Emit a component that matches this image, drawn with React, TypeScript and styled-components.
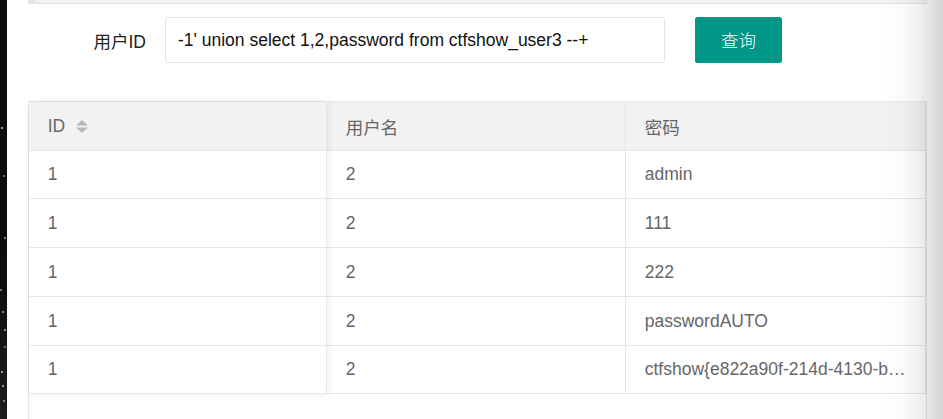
import React from 'react';
import styled, { createGlobalStyle, css } from 'styled-components';

const GlobalStyle = createGlobalStyle`
  html, body {
    margin: 0;
    padding: 0;
    height: 100%;
    overflow: hidden;
    background: #ffffff;
  }
  body {
    font-family: 'Liberation Sans', Arial, 'Noto Sans CJK SC', sans-serif;
  }
  * {
    box-sizing: border-box;
  }
`;

const Page = styled.div`
  position: relative;
  display: flex;
  width: 943px;
  height: 419px;
  overflow: hidden;
`;

const DarkStrip = styled.div`
  flex: 0 0 7px;
  background-color: #0d0d0d;
  background-image: radial-gradient(circle at 2px 128px, #9a9a9a 0 1px, transparent 1.5px),
    radial-gradient(circle at 4px 176px, #6a6a6a 0 1px, transparent 1.5px),
    radial-gradient(circle at 5px 238px, #7a7a7a 0 1px, transparent 1.5px),
    radial-gradient(circle at 3px 312px, #8a8a8a 0 1px, transparent 1.5px),
    radial-gradient(circle at 5px 347px, #6a6a6a 0 1px, transparent 1.5px),
    radial-gradient(circle at 2px 372px, #9a9a9a 0 1px, transparent 1.5px),
    radial-gradient(circle at 4px 401px, #7a7a7a 0 1px, transparent 1.5px),
    radial-gradient(circle at 1px 290px, #777 0 1px, transparent 1.5px),
    radial-gradient(circle at 5px 330px, #888 0 1px, transparent 1.5px),
    radial-gradient(circle at 3px 386px, #999 0 1px, transparent 1.5px),
    linear-gradient(to bottom, #0d0d0d 0, #0d0d0d 60%, #1c1c1c 100%);
`;

const Content = styled.div`
  flex: 1;
  padding-left: 21px;
  display: flex;
  flex-direction: column;
`;

const TopStrip = styled.div`
  width: 899px;
  height: 4px;
  border: 1px solid #e2e2e2;
  border-top: none;
  background: linear-gradient(to right, #e3e3e3 0, #e3e3e3 6px, #f2f2f2 6px);
`;

const FormRow = styled.form`
  display: flex;
  align-items: center;
  margin-top: 13px;
  height: 46px;
`;

const Label = styled.label`
  width: 137px;
  padding-right: 19px;
  padding-top: 1px;
  text-align: right;
  font-size: 17.5px;
  color: #222;
`;

const Input = styled.input`
  width: 500px;
  height: 46px;
  padding: 1px 12px 0;
  border: 1px solid #e6e6e6;
  border-radius: 2px;
  font-family: inherit;
  font-size: 17.5px;
  color: #111;
  outline: none;
`;

const QueryButton = styled.button`
  margin-left: 30px;
  width: 87px;
  height: 46px;
  border: none;
  border-radius: 2.5px;
  background-color: #009688;
  color: #ffffff;
  font-family: 'Noto Sans CJK SC', sans-serif;
  font-size: 17.5px;
  font-weight: 300;
  cursor: pointer;
`;

const TableBox = styled.div`
  margin-top: 38px;
  width: 899px;
  height: 340px;
  border: 1px solid #e6e6e6;
  border-bottom: none;
  display: flex;
  align-items: flex-start;
  background: #ffffff;
`;

const Column = styled.div<{ $width: number; $fixed?: boolean }>`
  width: ${p => p.$width}px;
  display: flex;
  flex-direction: column;
  ${p =>
    p.$fixed &&
    css`
      position: relative;
      z-index: 1;
      box-shadow: 1px 0 8px rgba(0, 0, 0, 0.08);
    `}
`;

const cellBase = css`
  height: 48.75px;
  display: flex;
  align-items: center;
  padding: 1px 18.75px 0;
  border-right: 1px solid #e6e6e6;
  border-bottom: 1px solid #e6e6e6;
  font-size: 17.5px;
  color: #666;
  white-space: nowrap;
  overflow: hidden;
`;

const HeadCell = styled.div`
  ${cellBase};
  background-color: #f2f2f2;
`;

const Cell = styled.div`
  ${cellBase};
  background-color: #ffffff;
`;

const CellText = styled.span`
  overflow: hidden;
  text-overflow: ellipsis;
`;

const SortIcon = styled.svg`
  margin-left: 11px;
  flex: 0 0 auto;
`;

const RightShade = styled.div`
  position: absolute;
  top: 0;
  right: 0;
  width: 60px;
  height: 100%;
  pointer-events: none;
  background: linear-gradient(
    to right,
    rgba(0, 0, 0, 0) 0,
    rgba(0, 0, 0, 0.02) 35%,
    rgba(0, 0, 0, 0.06) 60%,
    rgba(0, 0, 0, 0.17) 100%
  );
`;

const rows = [
  { id: '1', name: '2', pass: 'admin' },
  { id: '1', name: '2', pass: '111' },
  { id: '1', name: '2', pass: '222' },
  { id: '1', name: '2', pass: 'passwordAUTO' },
  { id: '1', name: '2', pass: 'ctfshow{e822a90f-214d-4130-b8e2-3a1c9f5d7e60}' },
];

const App = () => {
  return (
    <>
      <GlobalStyle />
      <Page>
        <DarkStrip />
        <Content>
          <TopStrip />
          <FormRow onSubmit={e => e.preventDefault()}>
            <Label htmlFor="userId">用户ID</Label>
            <Input
              id="userId"
              type="text"
              defaultValue="-1' union select 1,2,password from ctfshow_user3 --+"
            />
            <QueryButton type="submit">查询</QueryButton>
          </FormRow>
          <TableBox>
            <Column $width={298} $fixed>
              <HeadCell>
                ID
                <SortIcon width="12" height="13" viewBox="0 0 12 13">
                  <polygon points="6,0 12,5.5 0,5.5" fill="#b8b8b8" />
                  <polygon points="0,7.5 12,7.5 6,13" fill="#b8b8b8" />
                </SortIcon>
              </HeadCell>
              {rows.map((r, i) => (
                <Cell key={i}>
                  <CellText>{r.id}</CellText>
                </Cell>
              ))}
            </Column>
            <Column $width={299}>
              <HeadCell>用户名</HeadCell>
              {rows.map((r, i) => (
                <Cell key={i}>
                  <CellText>{r.name}</CellText>
                </Cell>
              ))}
            </Column>
            <Column $width={300}>
              <HeadCell>密码</HeadCell>
              {rows.map((r, i) => (
                <Cell key={i}>
                  <CellText>{r.pass}</CellText>
                </Cell>
              ))}
            </Column>
          </TableBox>
        </Content>
        <RightShade />
      </Page>
    </>
  );
};

export default App;
